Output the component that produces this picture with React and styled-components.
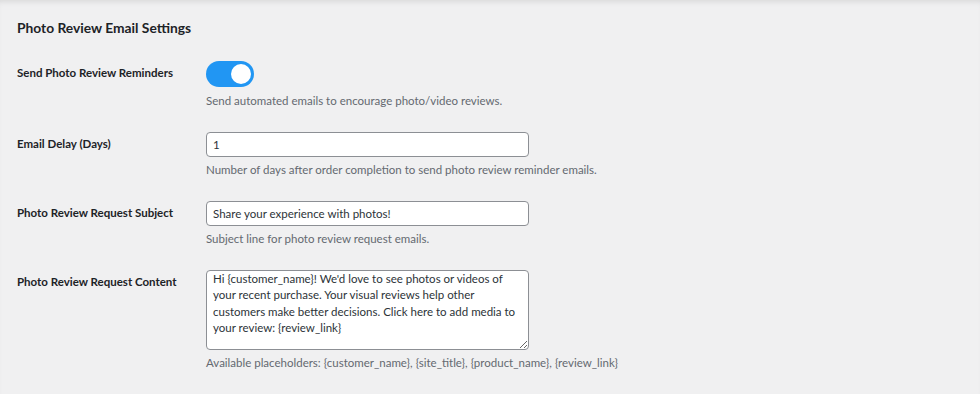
import React, { useState } from 'react';
import styled, { createGlobalStyle } from 'styled-components';

const GlobalStyle = createGlobalStyle`
  html, body {
    margin: 0;
    padding: 0;
    background: #f0f0f1;
  }
  body {
    font-family: Lato, "Noto Sans", sans-serif;
    color: #1d2327;
  }
`;

const Page = styled.div`
  min-height: 394px;
  box-sizing: border-box;
  padding: 17px 17px 0 17px;
  box-shadow: inset 0 5px 6px -4px rgba(0, 0, 0, 0.12);
`;

const Title = styled.h2`
  margin: 0 0 22px;
  font-size: 13.8px;
  font-weight: 700;
  line-height: 22px;
  color: #1d2327;
`;

const Table = styled.div`
  display: flex;
  flex-direction: column;
  gap: 22px;
`;

const Row = styled.div`
  display: grid;
  grid-template-columns: 189px 1fr;
  align-items: start;
`;

const Label = styled.div`
  font-size: 11.5px;
  font-weight: 700;
  line-height: 19px;
  padding-top: 2px;
  padding-right: 10px;
  color: #1d2327;
`;

const Field = styled.div`
  display: flex;
  flex-direction: column;
  align-items: flex-start;
`;

const Description = styled.p`
  margin: 3px 0 0;
  font-size: 11.5px;
  line-height: 19px;
  color: #646970;
`;

const Switch = styled.button`
  position: relative;
  width: 48px;
  height: 26px;
  margin: 0 0 1px;
  padding: 0;
  border: none;
  border-radius: 13px;
  background: ${(p) => (p.$on ? '#2196f3' : '#c3c4c7')};
  cursor: pointer;

  &::after {
    content: '';
    position: absolute;
    top: 3px;
    left: ${(p) => (p.$on ? '25px' : '3px')};
    width: 20px;
    height: 20px;
    border-radius: 50%;
    background: #fff;
  }
`;

const TextInput = styled.input`
  box-sizing: border-box;
  width: 323px;
  height: 25px;
  margin: 0;
  padding: 0 6px;
  border: 1px solid #8c8f94;
  border-radius: 4px;
  background: #fff;
  font-family: inherit;
  font-size: 11.5px;
  color: #2c3338;
  outline: none;
`;

const TextArea = styled.textarea`
  box-sizing: border-box;
  width: 323px;
  height: 80px;
  margin: 0;
  padding: 0 6px;
  border: 1px solid #8c8f94;
  border-radius: 4px;
  background: #fff;
  font-family: inherit;
  font-size: 11.5px;
  line-height: 16.3px;
  color: #2c3338;
  outline: none;
  resize: vertical;
`;

const defaultContent =
  "Hi {customer_name}! We'd love to see photos or videos of your recent purchase. Your visual reviews help other customers make better decisions. Click here to add media to your review: {review_link}";

export default function App() {
  const [enabled, setEnabled] = useState(true);
  const [delay, setDelay] = useState('1');
  const [subject, setSubject] = useState('Share your experience with photos!');
  const [content, setContent] = useState(defaultContent);

  return (
    <Page>
      <GlobalStyle />
      <Title>Photo Review Email Settings</Title>
      <Table>
        <Row>
          <Label>Send Photo Review Reminders</Label>
          <Field>
            <Switch $on={enabled} onClick={() => setEnabled(!enabled)} aria-label="Send Photo Review Reminders" />
            <Description>Send automated emails to encourage photo/video reviews.</Description>
          </Field>
        </Row>
        <Row>
          <Label>Email Delay (Days)</Label>
          <Field>
            <TextInput value={delay} onChange={(e) => setDelay(e.target.value)} />
            <Description>Number of days after order completion to send photo review reminder emails.</Description>
          </Field>
        </Row>
        <Row>
          <Label>Photo Review Request Subject</Label>
          <Field>
            <TextInput value={subject} onChange={(e) => setSubject(e.target.value)} />
            <Description>Subject line for photo review request emails.</Description>
          </Field>
        </Row>
        <Row>
          <Label>Photo Review Request Content</Label>
          <Field>
            <TextArea value={content} onChange={(e) => setContent(e.target.value)} />
            <Description>
              Available placeholders: {'{customer_name}'}, {'{site_title}'}, {'{product_name}'}, {'{review_link}'}
            </Description>
          </Field>
        </Row>
      </Table>
    </Page>
  );
}
